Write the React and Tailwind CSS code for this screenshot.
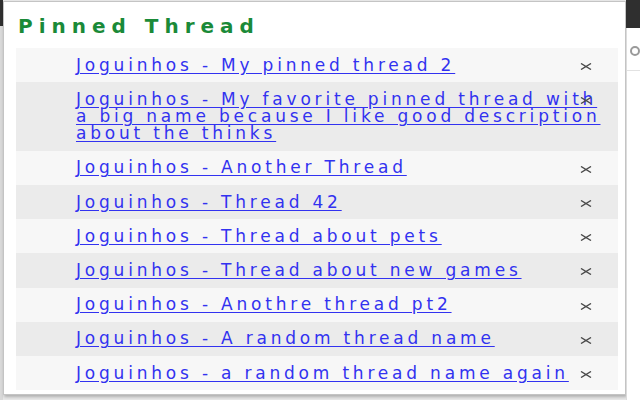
const threads = [
  'Joguinhos - My pinned thread 2',
  'Joguinhos - My favorite pinned thread with a big name because I like good description about the thinks',
  'Joguinhos - Another Thread',
  'Joguinhos - Thread 42',
  'Joguinhos - Thread about pets',
  'Joguinhos - Thread about new games',
  'Joguinhos - Anothre thread pt2',
  'Joguinhos - A random thread name',
  'Joguinhos - a random thread name again',
];

const CloseIcon = () => (
  <svg width="12" height="7" viewBox="0 0 12 7" className="block">
    <path d="M1 0.5 L11 6.5 M11 0.5 L1 6.5" stroke="#4a4a4a" strokeWidth="1.4" fill="none" />
  </svg>
);

const App = () => {
  return (
    <div className="w-[640px] h-[400px] overflow-hidden bg-[#e9e9e9] flex" style={{ fontFamily: '"DejaVu Sans", Verdana, sans-serif' }}>
      {/* left sliver of the page behind */}
      <div className="w-[3px] flex flex-col">
        <div className="h-[26px] bg-[#2f2f2f]" />
        <div className="flex-1 bg-[#d9d9d9]" />
      </div>

      {/* popup */}
      <div className="w-[629px] h-[394px] mt-[1px] bg-white border border-[#c4c4c4] shadow-[1px_2px_3px_rgba(0,0,0,0.25)] flex flex-col overflow-hidden">
        <h1 className="ml-[14px] mt-[12px] text-[20px] leading-[24px] font-bold tracking-[6px] text-[#1a8a38]">
          Pinned Thread
        </h1>
        <ul className="mt-[10px] ml-[12px] w-[602px]">
          {threads.map((t, i) => (
            <li
              key={i}
              className={`relative pl-[60px] pr-[6px] py-[8.5px] text-[17px] leading-[17.2px] ${i % 2 === 0 ? 'bg-[#f7f7f7]' : 'bg-[#ebebeb]'}`}
            >
              <a href="#" className="tracking-[3.8px] text-[#3232f0] underline underline-offset-[2px]">
                {t}
              </a>
              <button className="absolute right-[26px] top-[15px] p-0">
                <CloseIcon />
              </button>
            </li>
          ))}
        </ul>
      </div>

      {/* right sliver of the page behind */}
      <div className="flex-1 flex flex-col">
        <div className="h-[28px] bg-[#2f2f2f]" />
        <div className="flex-1 bg-white border-l border-[#dcdcdc] relative">
          <div className="mt-[18px] ml-[3px] w-[10px] h-[10px] rounded-full border-2 border-[#9a9a9a]" />
          <div className="mt-[14px] h-px bg-[#e2e2e2]" />
        </div>
      </div>
    </div>
  );
};

export default App;
